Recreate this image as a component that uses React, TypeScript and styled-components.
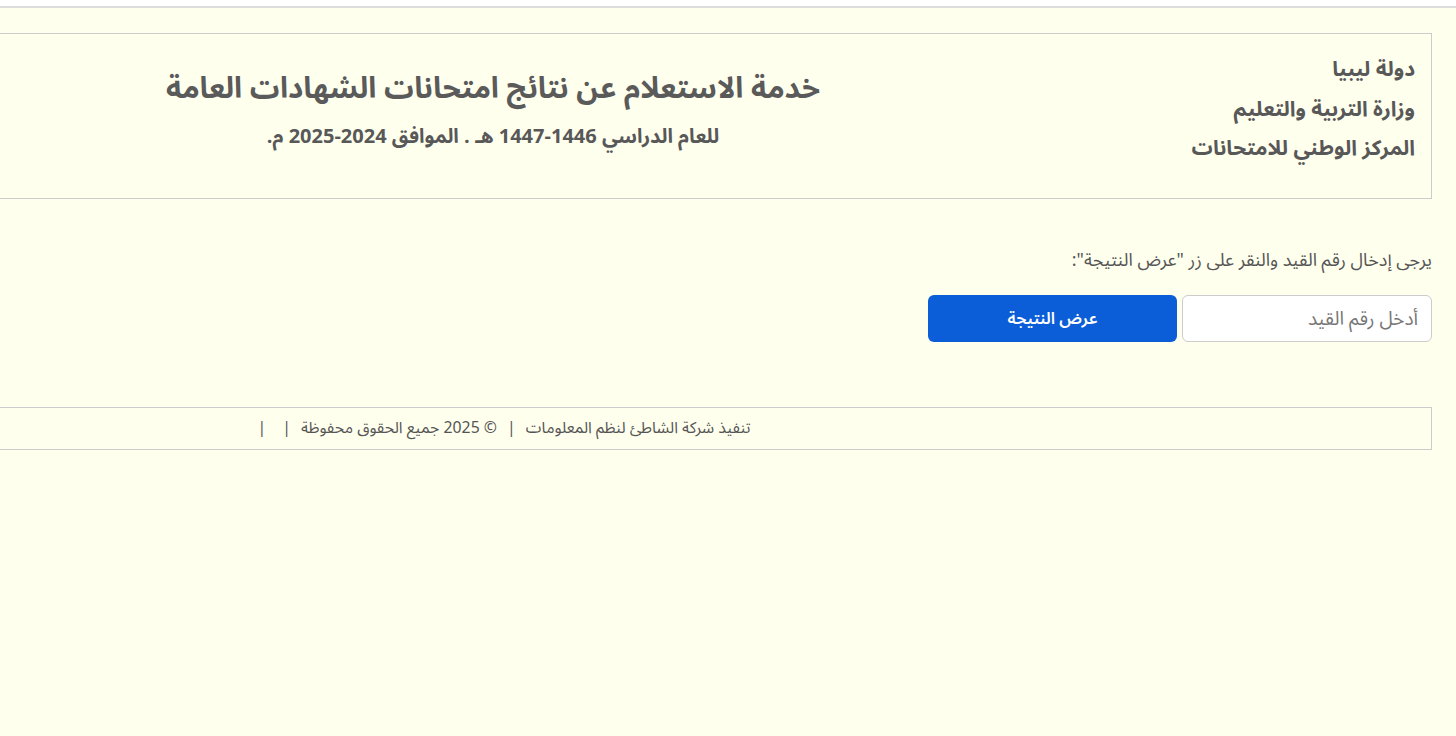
import { FC } from 'react';
import styled, { createGlobalStyle } from 'styled-components';

const GlobalStyle = createGlobalStyle`
  html, body {
    margin: 0;
    padding: 0;
    background: #ffffee;
    overflow: hidden;
  }
  body {
    font-family: "Noto Sans Arabic", "DejaVu Sans", sans-serif;
    color: #555555;
  }
  * {
    box-sizing: border-box;
  }
`;

const App: FC = () => {
  return (
    <Page dir="rtl">
      <GlobalStyle />
      <TopBar />
      <Content>
        <HeaderBox>
          <Ministry>
            <MinistryLine>دولة ليبيا</MinistryLine>
            <MinistryLine>وزارة التربية والتعليم</MinistryLine>
            <MinistryLine>المركز الوطني للامتحانات</MinistryLine>
          </Ministry>
          <TitleBlock>
            <Title>خدمة الاستعلام عن نتائج امتحانات الشهادات العامة</Title>
            <SubTitle>للعام الدراسي 1446-1447 هـ . الموافق 2024-2025 م.</SubTitle>
          </TitleBlock>
        </HeaderBox>

        <SearchSection>
          <Hint>يرجى إدخال رقم القيد والنقر على زر "عرض النتيجة":</Hint>
          <SearchRow>
            <Input type="text" placeholder="أدخل رقم القيد" />
            <Button type="button">عرض النتيجة</Button>
          </SearchRow>
        </SearchSection>

        <Footer>
          <span />
          <FooterText>
            تنفيذ شركة الشاطئ لنظم المعلومات <Sep>|</Sep> © 2025 جميع الحقوق محفوظة{' '}
            <Sep>|</Sep> <Sep>|</Sep>
          </FooterText>
        </Footer>
      </Content>
    </Page>
  );
};

const Page = styled.div`
  width: 1456px;
  height: 736px;
  background: #ffffee;
`;

const TopBar = styled.div`
  height: 8px;
  background: #ffffff;
  border-bottom: 2px solid #dddddd;
`;

const Content = styled.div`
  padding: 25px 24px 0 0;
  margin-left: -10px;
`;

const HeaderBox = styled.div`
  display: grid;
  grid-template-columns: 420px 1fr;
  height: 166px;
  border: 1px solid #cccccc;
  padding: 14px 16px 0 0;
`;

const Ministry = styled.div`
  display: flex;
  flex-direction: column;
  padding-top: 2px;
  text-align: right;
`;

const MinistryLine = styled.div`
  font-size: 21px;
  font-weight: 700;
  line-height: 39.5px;
  color: #585858;
`;

const TitleBlock = styled.div`
  display: flex;
  flex-direction: column;
  align-items: center;
  padding-top: 19px;
`;

const Title = styled.h1`
  margin: 0;
  font-size: 29.5px;
  font-weight: 700;
  line-height: 44px;
  color: #5a5a5a;
`;

const SubTitle = styled.div`
  margin-top: 12px;
  font-size: 20px;
  font-weight: 700;
  line-height: 28px;
  color: #585858;
`;

const SearchSection = styled.div`
  padding-top: 48px;
  margin-left: 10px;
`;

const Hint = styled.p`
  margin: 0;
  font-size: 18px;
  line-height: 26px;
  color: #555555;
`;

const SearchRow = styled.div`
  display: flex;
  gap: 5px;
  margin-top: 22px;
`;

const Input = styled.input`
  width: 250px;
  height: 47px;
  border: 1px solid #cccccc;
  border-radius: 6px;
  background: #ffffff;
  padding: 0 13px;
  font-family: inherit;
  font-size: 19px;
  color: #555555;
  outline: none;

  &::placeholder {
    color: #777777;
  }
`;

const Button = styled.button`
  width: 249px;
  height: 47px;
  border: none;
  border-radius: 6px;
  background: #0b5ed7;
  color: #ffffff;
  font-family: inherit;
  font-size: 16.5px;
  font-weight: 600;
  cursor: pointer;
`;

const Footer = styled.div`
  display: grid;
  grid-template-columns: 420px 1fr;
  margin-top: 65px;
  height: 43px;
  border: 1px solid #cccccc;
  align-items: center;
`;

const FooterText = styled.div`
  text-align: center;
  font-size: 15.8px;
  color: #555555;
  padding-bottom: 2px;
`;

const Sep = styled.span`
  margin: 0 6px;
  color: #555555;
`;

export default App;
